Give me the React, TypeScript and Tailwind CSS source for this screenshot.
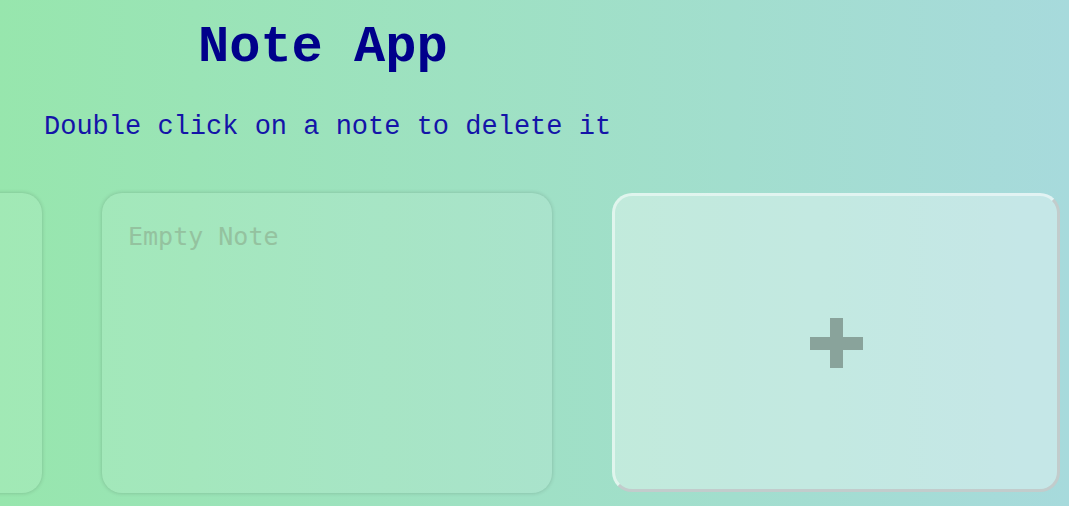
export default function App() {
  return (
    <div className="min-h-screen w-full overflow-hidden bg-linear-to-r from-[#97e6ad] to-[#a7dadc] font-['Courier_New','Nimbus_Mono_PS','FreeMono','Liberation_Mono',monospace]">
      <h1 className="pl-[198px] pt-[22px] text-[52px] font-bold leading-none text-[#00008b]">
        Note App
      </h1>
      <p className="mt-[40px] pl-[44px] text-[27px] leading-none text-[#1414a8]">
        Double click on a note to delete it
      </p>

      <div className="mt-[52px] ml-[-408px] flex gap-[60px]">
        <div className="h-[300px] w-[450px] shrink-0 rounded-[20px] bg-white/10 shadow-[0_0_4px_rgba(0,0,0,0.18)]" />

        <div className="h-[300px] w-[450px] shrink-0 rounded-[20px] bg-white/10 shadow-[0_0_4px_rgba(0,0,0,0.18)]">
          <textarea
            placeholder="Empty Note"
            className="h-full w-full resize-none bg-transparent pl-[26px] pr-6 pt-[25px] font-['DejaVu_Sans_Mono',monospace] text-[25px] outline-none placeholder:text-[#94c29f]"
          />
        </div>

        <button className="flex h-[299px] w-[448px] shrink-0 items-center justify-center rounded-[20px] border-[3px] border-t-white/50 border-l-white/50 border-b-[#c2cccc] border-r-[#c2cccc] bg-white/35">
          <span className="relative block h-[50px] w-[53px]">
            <span className="absolute left-[20px] top-0 h-[50px] w-[13px] bg-[#89a39b]" />
            <span className="absolute left-0 top-[19px] h-[13px] w-[53px] bg-[#89a39b]" />
          </span>
        </button>
      </div>
    </div>
  );
}
